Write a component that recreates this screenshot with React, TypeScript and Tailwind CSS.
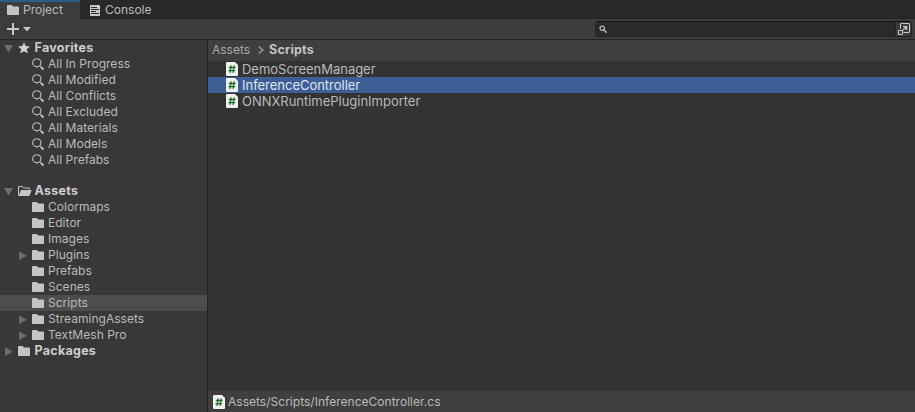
import type { ReactNode } from "react";

function Folder() {
  return (
    <svg width="12" height="10" viewBox="0 0 12 10" className="shrink-0" fill="#c4c4c4">
      <path d="M0 1 Q0 0 1 0 H4.3 Q5 0 5.4 .7 L6 1.6 H11 Q12 1.6 12 2.6 V9 Q12 10 11 10 H1 Q0 10 0 9 Z" />
    </svg>
  );
}

function OpenFolder() {
  return (
    <svg width="14" height="10" viewBox="0 0 14 10" className="shrink-0" fill="#c4c4c4">
      <path d="M.5 9.5 V.5 H4.3 L5.3 2 H11.5 V3.5" fill="none" stroke="#c4c4c4" />
      <path d="M3 4 H13.6 L11.8 9.3 Q11.5 10 10.8 10 H.6 Z" />
    </svg>
  );
}

function Star() {
  return (
    <svg width="12" height="12" viewBox="0 0 12 12" className="shrink-0" fill="#d2d2d2">
      <path d="M6 0 L7.6 4.1 L12 4.5 L8.7 7.3 L9.8 11.6 L6 9.3 L2.2 11.6 L3.3 7.3 L0 4.5 L4.4 4.1 Z" />
    </svg>
  );
}

function Search() {
  return (
    <svg width="12" height="12" viewBox="0 0 12 12" className="shrink-0" fill="none" stroke="#c4c4c4">
      <circle cx="4.8" cy="4.8" r="4.1" strokeWidth="1.1" />
      <path d="M7.9 7.9 L9.4 9.4" strokeWidth="1.1" />
      <path d="M9 9 L11.5 11.5" strokeWidth="1.9" />
    </svg>
  );
}

function Script() {
  return (
    <svg width="12" height="14" viewBox="0 0 12 14" className="shrink-0">
      <path d="M1 0 H9 L12 3 V13 Q12 14 11 14 H1 Q0 14 0 13 V1 Q0 0 1 0 Z" fill="#f2f2f2" />
      <path d="M5.2 3.3 L4 10.8 M8.2 3.3 L7 10.8 M2.8 5.5 H9.6 M2.4 8.6 H9.2" stroke="#216e2b" strokeWidth="1.3" fill="none" />
    </svg>
  );
}

function Arrow({ open }: { open?: boolean }) {
  return (
    <svg width="9" height="9" viewBox="0 0 9 9" className="shrink-0" fill="#6e6e6e">
      {open ? <path d="M0 1 H9 L4.5 8.5 Z" /> : <path d="M1 .3 L8.7 4.7 L1 9 Z" />}
    </svg>
  );
}

function Root({ icon, label, open }: { icon: ReactNode; label: string; open?: boolean }) {
  return (
    <div className="flex h-4 items-center pl-1">
      <div className="flex w-3.5 pt-px">
        <Arrow open={open} />
      </div>
      <div className="flex w-[16.5px]">{icon}</div>
      <span className="text-[12.5px] font-bold tracking-[0.28px] text-[#cecece]">{label}</span>
    </div>
  );
}

function Item({ icon, label, arrow, selected }: { icon: ReactNode; label: string; arrow?: boolean; selected?: boolean }) {
  return (
    <div className={`flex h-4 items-center pl-[18px] ${selected ? "bg-[#4d4d4d]" : ""}`}>
      <div className="flex w-3.5 pt-px">{arrow && <Arrow />}</div>
      <div className="flex w-4">{icon}</div>
      <span className="tracking-[0.03px]">{label}</span>
    </div>
  );
}

const searches = ["All In Progress", "All Modified", "All Conflicts", "All Excluded", "All Materials", "All Models", "All Prefabs"];
const folders = ["Colormaps", "Editor", "Images", "Plugins", "Prefabs", "Scenes", "Scripts", "StreamingAssets", "TextMesh Pro"];
const expandable = ["Plugins", "StreamingAssets", "TextMesh Pro"];
const files = ["DemoScreenManager", "InferenceController", "ONNXRuntimePluginImporter"];

export default function App() {
  return (
    <div className="flex h-[412px] w-[915px] flex-col overflow-hidden bg-[#383838] font-['Inter',sans-serif] text-[12px] leading-4 whitespace-nowrap text-[#bababa]">
      <div className="flex h-[19px] shrink-0 bg-[#282828]">
        <div className="flex w-20 items-center border-t-2 border-[#2c5d87] bg-[#3c3c3c] pb-px pl-[7px]">
          <Folder />
          <span className="ml-1">Project</span>
        </div>
        <div className="flex flex-1 items-center border-b border-[#222222] pt-0.5 pl-2.5">
          <svg width="10" height="11" viewBox="0 0 10 11" className="shrink-0">
            <rect width="10" height="11" rx="1" fill="#c9c9c9" />
            <path d="M1 2.5 H7 M1 4.5 H9 M1 6.5 H6 M1 8.5 H9" stroke="#282828" />
          </svg>
          <span className="ml-[5px]">Console</span>
        </div>
      </div>

      <div className="flex h-[21px] shrink-0 items-center border-b border-[#232323] bg-[#3c3c3c] pl-[7px]">
        <svg width="24" height="12" viewBox="0 0 24 12">
          <path d="M6 0 V12 M0 6 H12" stroke="#c8c8c8" strokeWidth="2" />
          <path d="M16 4 H24 L20 8.3 Z" fill="#c8c8c8" />
        </svg>
        <div className="mr-[3px] ml-auto flex h-4 w-[317px] overflow-hidden rounded-[4px] border border-[#222222] border-t-[#121212] bg-[#2a2a2a]">
          <svg width="16" height="14" viewBox="0 0 16 14" fill="none" stroke="#c4c4c4">
            <circle cx="6.2" cy="6.2" r="2.2" strokeWidth="1.2" />
            <path d="M8 8 L10.7 10.7" strokeWidth="1.3" />
          </svg>
          <div className="ml-auto w-4 border-l border-[#222222] bg-[#3c3c3c]">
            <svg width="15" height="14" viewBox="0 0 15 14" className="max-w-none" fill="none" stroke="#c8c8c8">
              <path d="M4.5 6.5 V2 Q4.5 1.5 5 1.5 H13 Q13.5 1.5 13.5 2 V10 Q13.5 10.5 13 10.5 H7.5" />
              <path d="M2.5 8.5 H6.5 V12.5 H2.5 Z" />
              <path d="M7 8 L10.5 4.5 M7 4.5 H10.5 V8" strokeWidth="1.2" />
            </svg>
          </div>
        </div>
      </div>

      <div className="flex min-h-0 flex-1">
        <div className="w-52 shrink-0 border-r border-[#232323] bg-[#383838]">
          <Root icon={<Star />} label="Favorites" open />
          {searches.map((s) => (
            <Item key={s} icon={<Search />} label={s} />
          ))}
          <div className="h-[15px]" />
          <Root icon={<OpenFolder />} label="Assets" open />
          {folders.map((f) => (
            <Item key={f} icon={<Folder />} label={f} arrow={expandable.includes(f)} selected={f === "Scripts"} />
          ))}
          <Root icon={<Folder />} label="Packages" />
        </div>

        <div className="flex flex-1 flex-col bg-[#333333]">
          <div className="flex h-[21px] items-center bg-[#3f3f3f] pb-px pl-1">
            <span className="text-[#a8a8a8]">Assets</span>
            <svg width="6" height="8" viewBox="0 0 6 8" className="mr-[5px] ml-2" fill="none" stroke="#a0a0a0" strokeWidth="1.3">
              <path d="M.7 .5 L5 4 L.7 7.5" />
            </svg>
            <span className="text-[12.5px] font-bold tracking-[0.2px] text-[#c4c4c4]">Scripts</span>
          </div>
          {files.map((f) => (
            <div key={f} className={`flex h-4 items-center gap-1 pl-[18px] text-[13px] tracking-[-0.02px] ${f === "InferenceController" ? "bg-[#3e5f96] text-[#dfe5ee]" : ""}`}>
              <Script />
              <span>{f}</span>
            </div>
          ))}
          <div className="mt-auto flex h-[21px] items-center gap-[3px] bg-[#3f3f3f] pl-[5px]">
            <Script />
            <span className="tracking-[0.02px]">Assets/Scripts/InferenceController.cs</span>
          </div>
        </div>
      </div>
    </div>
  );
}
